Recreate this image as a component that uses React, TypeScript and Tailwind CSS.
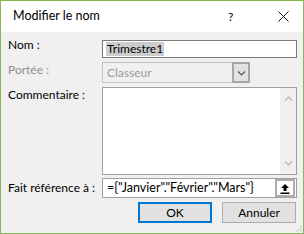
import React from "react";

function Chevron({ dir, color }: { dir: "up" | "down"; color: string }) {
  return (
    <svg width="9" height="6" viewBox="0 0 9 6">
      {dir === "down" ? (
        <path d="M1 1.5 L4.5 5 L8 1.5" fill="none" stroke={color} strokeWidth="1.2" />
      ) : (
        <path d="M1 4.5 L4.5 1 L8 4.5" fill="none" stroke={color} strokeWidth="1.2" />
      )}
    </svg>
  );
}

export default function App() {
  const font = { fontFamily: 'Lato, "Noto Sans", sans-serif' };
  return (
    <div
      className="w-[304px] h-[234px] border border-[#84b94e] flex flex-col text-[12px] text-black overflow-hidden"
      style={font}
    >
      {/* Title bar */}
      <div className="h-[31px] bg-white flex items-center shrink-0">
        <span className="ml-[12px] text-[12.5px] flex-1">Modifier le nom</span>
        <span className="w-[10px] text-[12px] mr-[40px]">?</span>
        <svg width="11" height="11" viewBox="0 0 11 11" className="mr-[14px]">
          <path d="M0.5 0.5 L10.5 10.5 M10.5 0.5 L0.5 10.5" stroke="#111" strokeWidth="1" />
        </svg>
      </div>

      {/* Content */}
      <div className="flex-1 bg-[#f0f0f0] flex flex-col pt-[8px] pl-[7px] pr-[6px] relative">
        {/* Nom */}
        <div className="flex h-[18px]">
          <div className="w-[94px] leading-[14px] -mt-[2px]">Nom :</div>
          <div className="flex-1 border border-[#7a7a7a] bg-white flex items-center pl-[3px]">
            <span className="bg-[#cccccc] leading-[14px] px-[1px]">Trimestre1</span>
          </div>
        </div>

        {/* Portée */}
        <div className="flex h-[21px] mt-[4px]">
          <div className="w-[94px] leading-[14px] mt-[1px] text-[#8d8d8d]">Portée :</div>
          <div className="w-[148px] border border-[#c4c4c4] flex">
            <div className="flex-1 flex items-center pl-[4px] text-[#9a9a9a]">Classeur</div>
            <div className="w-[18px] -my-[1px] -mr-[1px] border-2 border-[#a6a6a6] bg-[#e2e2e2] flex items-center justify-center">
              <Chevron dir="down" color="#555" />
            </div>
          </div>
        </div>

        {/* Commentaire */}
        <div className="flex h-[88px] mt-[4px]">
          <div className="w-[94px] leading-[14px] mt-[1px]">Commentaire :</div>
          <div className="flex-1 border border-[#a0a0a0] bg-white flex justify-end">
            <div className="w-[16px] bg-[#f0f0f0] flex flex-col justify-between items-center py-[8px]">
              <Chevron dir="up" color="#b4b4b4" />
              <Chevron dir="down" color="#b4b4b4" />
            </div>
          </div>
        </div>

        {/* Fait référence */}
        <div className="flex h-[20px] mt-[3px]">
          <div className="w-[94px] leading-[14px] mt-[3px]">Fait référence à :</div>
          <div className="flex-1 border border-[#a0a0a0] bg-white flex items-center">
            <span className="flex-1 pl-[4px] text-[12.5px] leading-[16px]">={"{"}"Janvier"."Février"."Mars"{"}"}</span>
            <div className="w-[20px] h-[18px] border-2 border-[#adadad] bg-white flex items-center justify-center mr-[1px]">
              <svg width="10" height="11" viewBox="0 0 10 11">
                <path d="M5 1 L1 5 L3.5 5 L3.5 8 L6.5 8 L6.5 5 L9 5 Z" fill="#000" />
                <rect x="0.5" y="9.5" width="9" height="1.5" fill="#000" />
              </svg>
            </div>
          </div>
        </div>

        {/* Buttons */}
        <div className="flex h-[21px] mt-[4px] justify-end gap-[10px] pr-[1px]">
          <button className="w-[74px] h-[21px] border-2 border-[#0078d7] bg-[#e1e1e1] text-[12px] leading-[14px]">OK</button>
          <button className="w-[74px] h-[21px] border border-[#adadad] bg-[#e1e1e1] text-[12px] leading-[14px]">Annuler</button>
        </div>

        {/* resize grip */}
        <svg width="8" height="8" viewBox="0 0 8 8" className="absolute right-0 bottom-0">
          <path d="M7 1 L1 7 M7 4 L4 7 M7 6.5 L6.5 7" stroke="#a8a8a8" strokeWidth="1" strokeDasharray="1 1" />
        </svg>
      </div>
    </div>
  );
}
